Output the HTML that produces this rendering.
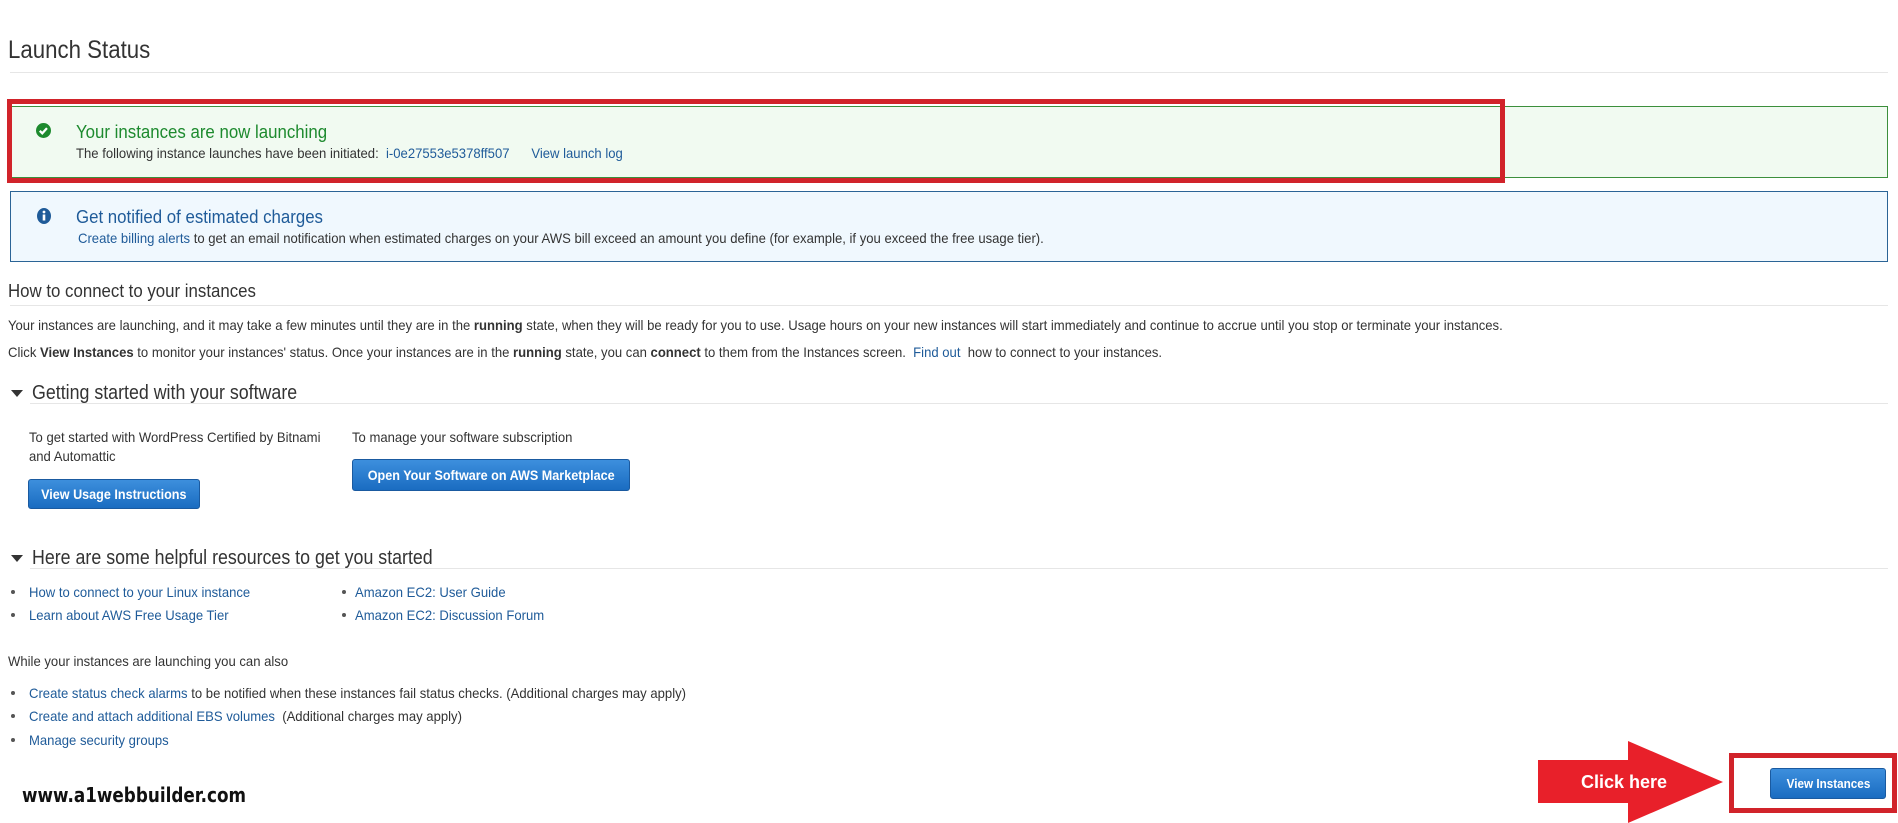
<!DOCTYPE html>
<html><head><meta charset="utf-8"><style>
body{margin:0;width:1898px;height:823px;background:#fff;position:relative;overflow:hidden;font-family:"Liberation Sans",Arial,sans-serif;color:#444}
.a{position:absolute;white-space:nowrap;transform:scaleX(0.935);transform-origin:0 50%;line-height:1}
.h{transform:scaleX(0.89)}
.l{color:#1f5b99}
.hr{position:absolute;height:1px;background:#e6e6e6;left:10px;right:10px}
.box{position:absolute;left:10px;width:1876px;border:1px solid}
.btn{position:absolute;background:linear-gradient(#3d8fdd,#1a6cc1);border:1px solid #1a5aa0;border-radius:3px;color:#fff;font-weight:bold;font-size:14px;display:flex;align-items:center;justify-content:center}
.btn span{transform:scaleX(0.9);white-space:nowrap}
.tri{position:absolute;width:0;height:0;border-left:6px solid transparent;border-right:6px solid transparent;border-top:7px solid #333}
.dot{position:absolute;width:4px;height:4px;border-radius:50%;background:#555}
</style></head><body>
<div class="a h" style="left:8px;top:38px;font-size:25px;color:#333">Launch Status</div>
<div class="hr" style="top:72px"></div>

<div class="box" style="top:106px;height:70px;background:#f1faf1;border-color:#3c8f3c"></div>
<div style="position:absolute;left:7px;top:99px;width:1488px;height:74px;border:5px solid #d1232a"></div>
<svg style="position:absolute;left:36px;top:123px" width="15" height="15" viewBox="0 0 16 16"><circle cx="8" cy="8" r="8" fill="#1d8a2e"/><path d="M4 8.3l2.7 2.7 5-5.5" stroke="#fff" stroke-width="2.4" fill="none"/></svg>
<div class="a" style="left:76px;top:123px;font-size:18px;color:#1d8a2e">Your instances are now launching</div>
<div class="a" style="left:76px;top:146px;font-size:14px;color:#333">The following instance launches have been initiated: <span class="l">&nbsp;i-0e27553e5378ff507</span> &nbsp; &nbsp; &nbsp;<span class="l">View launch log</span></div>

<div class="box" style="top:191px;height:69px;background:#f0f8fe;border-color:#2b6496"></div>
<svg style="position:absolute;left:37px;top:208px" width="14" height="16" viewBox="0 0 14 16"><ellipse cx="7" cy="8" rx="7" ry="8" fill="#1f5b99"/><rect x="5.7" y="6.5" width="2.6" height="6" fill="#fff"/><circle cx="7" cy="4" r="1.4" fill="#fff"/></svg>
<div class="a" style="left:76px;top:208px;font-size:18px;color:#1f5b99">Get notified of estimated charges</div>
<div class="a" style="left:78px;top:231px;font-size:14px;color:#333"><span class="l">Create billing alerts</span> to get an email notification when estimated charges on your AWS bill exceed an amount you define (for example, if you exceed the free usage tier).</div>

<div class="a" style="left:8px;top:282px;font-size:18px;color:#333">How to connect to your instances</div>
<div class="hr" style="top:305px"></div>
<div class="a" style="left:8px;top:318px;font-size:14px;color:#333">Your instances are launching, and it may take a few minutes until they are in the <b>running</b> state, when they will be ready for you to use. Usage hours on your new instances will start immediately and continue to accrue until you stop or terminate your instances.</div>
<div class="a" style="left:8px;top:345px;font-size:14px;color:#333">Click <b>View Instances</b> to monitor your instances' status. Once your instances are in the <b>running</b> state, you can <b>connect</b> to them from the Instances screen. <span class="l">&nbsp;Find out</span> &nbsp;how to connect to your instances.</div>

<div class="tri" style="left:11px;top:390px"></div>
<div class="a h" style="left:32px;top:383px;font-size:20px;color:#333">Getting started with your software</div>
<div class="hr" style="top:403px;left:30px"></div>
<div class="a" style="left:29px;top:430px;font-size:14px;color:#333">To get started with WordPress Certified by Bitnami</div>
<div class="a" style="left:29px;top:449px;font-size:14px;color:#333">and Automattic</div>
<div class="a" style="left:352px;top:430px;font-size:14px;color:#333">To manage your software subscription</div>
<div class="btn" style="left:28px;top:479px;width:170px;height:28px"><span>View Usage Instructions</span></div>
<div class="btn" style="left:352px;top:459px;width:276px;height:30px"><span>Open Your Software on AWS Marketplace</span></div>

<div class="tri" style="left:11px;top:555px"></div>
<div class="a h" style="left:32px;top:548px;font-size:20px;color:#333">Here are some helpful resources to get you started</div>
<div class="hr" style="top:568px;left:30px"></div>
<div class="dot" style="left:11px;top:590px"></div><div class="a l" style="left:29px;top:585px;font-size:14px">How to connect to your Linux instance</div>
<div class="dot" style="left:11px;top:613px"></div><div class="a l" style="left:29px;top:608px;font-size:14px">Learn about AWS Free Usage Tier</div>
<div class="dot" style="left:342px;top:590px"></div><div class="a l" style="left:355px;top:585px;font-size:14px">Amazon EC2: User Guide</div>
<div class="dot" style="left:342px;top:613px"></div><div class="a l" style="left:355px;top:608px;font-size:14px">Amazon EC2: Discussion Forum</div>

<div class="a" style="left:8px;top:654px;font-size:14px;color:#333">While your instances are launching you can also</div>
<div class="dot" style="left:11px;top:691px"></div><div class="a" style="left:29px;top:686px;font-size:14px;color:#333"><span class="l">Create status check alarms</span> to be notified when these instances fail status checks. (Additional charges may apply)</div>
<div class="dot" style="left:11px;top:714px"></div><div class="a" style="left:29px;top:709px;font-size:14px;color:#333"><span class="l">Create and attach additional EBS volumes</span> &nbsp;(Additional charges may apply)</div>
<div class="dot" style="left:11px;top:738px"></div><div class="a l" style="left:29px;top:733px;font-size:14px">Manage security groups</div>

<div class="a" style="left:22px;top:785px;font-size:20px;font-weight:bold;color:#111;font-family:'DejaVu Sans',sans-serif;transform:scaleX(0.84)">www.a1webbuilder.com</div>

<svg style="position:absolute;left:1536px;top:741px" width="190" height="82" viewBox="0 0 190 82"><path d="M2 19H92V0L187 41L92 82V62H2Z" fill="#e8202a"/></svg>
<div style="position:absolute;left:1581px;top:772px;font-size:18px;font-weight:bold;color:#fff;white-space:nowrap">Click here</div>
<div style="position:absolute;left:1729px;top:753px;width:158px;height:50px;border:5px solid #d1232a"></div>
<div class="btn" style="left:1770px;top:768px;width:114px;height:29px;font-size:13px"><span>View Instances</span></div>
</body></html>
